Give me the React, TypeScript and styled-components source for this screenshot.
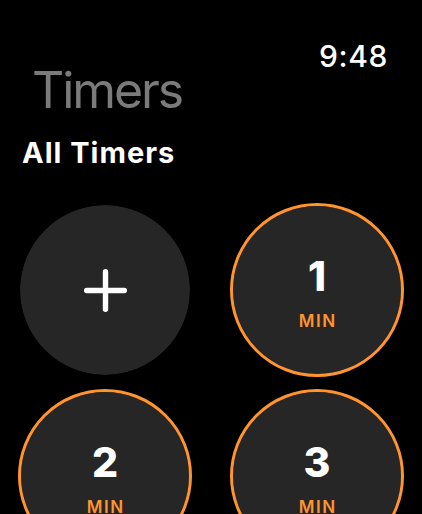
import React from "react";
import styled, { createGlobalStyle } from "styled-components";

const Global = createGlobalStyle`
  html, body { margin: 0; padding: 0; background: #000; }
  body { font-family: Inter, "Noto Sans", sans-serif; overflow: hidden; }
`;

const Screen = styled.div`
  width: 422px;
  height: 514px;
  background: #000;
  overflow: hidden;
  display: flex;
  flex-direction: column;
`;

const Header = styled.div`
  display: flex;
  justify-content: space-between;
  align-items: flex-start;
  padding: 41px 34px 0 32px;
`;

const Title = styled.div`
  margin-top: 24px;
  font-size: 50px;
  line-height: 50px;
  font-weight: 400;
  color: #7b7b7b;
  letter-spacing: -2.1px;
`;

const Time = styled.div`
  font-size: 30px;
  line-height: 30px;
  font-weight: 500;
  color: #fff;
  letter-spacing: 0.6px;
`;

const Section = styled.div`
  margin: 23px 0 0 22px;
  font-size: 29px;
  line-height: 29px;
  font-weight: 700;
  color: #fff;
  letter-spacing: 1px;
`;

const Grid = styled.div`
  display: grid;
  grid-template-columns: 174px 174px;
  column-gap: 38px;
  row-gap: 12px;
  padding: 36px 0 0 18px;
`;

const Circle = styled.div<{ $ring?: boolean }>`
  box-sizing: border-box;
  width: 174px;
  height: 174px;
  border-radius: 50%;
  background: #262626;
  background-clip: padding-box;
  border: ${(p) => (p.$ring ? "3px solid #ff9430" : "2px solid #000")};
  display: flex;
  flex-direction: column;
  align-items: center;
  justify-content: ${(p) => (p.$ring ? "flex-start" : "center")};
  padding-top: ${(p) => (p.$ring ? "50px" : "0")};
`;

const Number = styled.div`
  font-size: 41px;
  line-height: 41px;
  font-weight: 800;
  color: #fff;
`;

const Unit = styled.div`
  margin-top: 16px;
  font-size: 17px;
  line-height: 17px;
  font-weight: 600;
  color: #ff9430;
  letter-spacing: 1.6px;
  padding-left: 1.6px;
`;

const PlusIcon = () => (
  <svg width="43" height="43" viewBox="0 0 43 43">
    <path
      d="M21.5 2.7 V40.3 M2.7 21.5 H40.3"
      stroke="#fff"
      strokeWidth="5.4"
      strokeLinecap="round"
      fill="none"
    />
  </svg>
);

const timers = [1, 2, 3];

export default function App() {
  return (
    <Screen>
      <Global />
      <Header>
        <Title>Timers</Title>
        <Time>9:48</Time>
      </Header>
      <Section>All Timers</Section>
      <Grid>
        <Circle>
          <PlusIcon />
        </Circle>
        {timers.map((t) => (
          <Circle key={t} $ring>
            <Number>{t}</Number>
            <Unit>MIN</Unit>
          </Circle>
        ))}
      </Grid>
    </Screen>
  );
}
